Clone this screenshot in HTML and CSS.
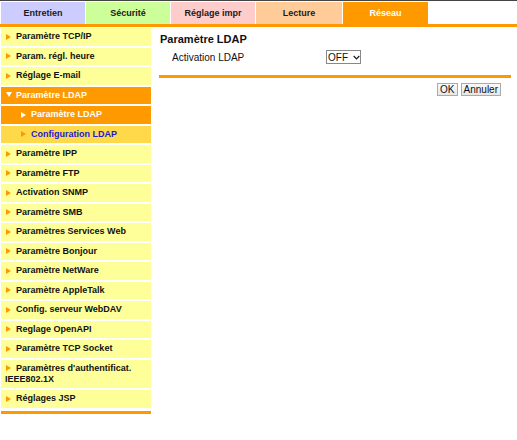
FILE: index.html
```html
<!DOCTYPE html>
<html lang="fr">
<head>
<meta charset="utf-8">
<title>Paramètre LDAP</title>
<link rel="stylesheet" href="styles.css">
</head>
<body>
<div class="topline"></div>
<div class="tabs">
  <div class="tab tab-entretien">Entretien</div>
  <div class="tab tab-securite">Sécurité</div>
  <div class="tab tab-reglage">Réglage impr</div>
  <div class="tab tab-lecture">Lecture</div>
  <div class="tab tab-reseau">Réseau</div>
</div>
<div class="tabrule"></div>
<div class="main">
  <nav class="side">
    <div class="row"><span class="arr"></span>Paramètre TCP/IP</div>
    <div class="row"><span class="arr"></span>Param. régl. heure</div>
    <div class="row"><span class="arr"></span>Réglage E-mail</div>
    <div class="row row-open"><span class="arr-down"></span>Paramètre LDAP</div>
    <div class="row row-sub row-open"><span class="arr arr-white"></span>Paramètre LDAP</div>
    <div class="row row-sub row-cur"><span class="arr"></span>Configuration LDAP</div>
    <div class="row"><span class="arr"></span>Paramètre IPP</div>
    <div class="row"><span class="arr"></span>Paramètre FTP</div>
    <div class="row"><span class="arr"></span>Activation SNMP</div>
    <div class="row"><span class="arr"></span>Paramètre SMB</div>
    <div class="row"><span class="arr"></span>Paramètres Services Web</div>
    <div class="row"><span class="arr"></span>Paramètre Bonjour</div>
    <div class="row"><span class="arr"></span>Paramètre NetWare</div>
    <div class="row"><span class="arr"></span>Paramètre AppleTalk</div>
    <div class="row"><span class="arr"></span>Config. serveur WebDAV</div>
    <div class="row"><span class="arr"></span>Reglage OpenAPI</div>
    <div class="row"><span class="arr"></span>Paramètre TCP Socket</div>
    <div class="row"><span class="arr"></span>Paramètres d'authentificat. IEEE802.1X</div>
    <div class="row"><span class="arr"></span>Réglages JSP</div>
    <div class="side-rule"></div>
  </nav>
  <section class="content">
    <h1 class="title">Paramètre LDAP</h1>
    <div class="field">
      <span class="label">Activation LDAP</span>
      <span class="select">OFF<svg class="chev" width="8" height="5" viewBox="0 0 8 5"><path d="M0.8 0.8 L4 4 L7.2 0.8" fill="none" stroke="#1a1a1a" stroke-width="1.4"/></svg></span>
    </div>
    <div class="rule"></div>
    <div class="buttons">
      <button class="btn">OK</button>
      <button class="btn">Annuler</button>
    </div>
  </section>
</div>
</body>
</html>
```
FILE: styles.css
```css
html, body {
  margin: 0;
  padding: 0;
  background: #fff;
}
body {
  font-family: "Liberation Sans", Arial, sans-serif;
  width: 517px;
  height: 440px;
  overflow: hidden;
}
.topline {
  height: 1px;
  background: #444;
}
.tabs {
  display: flex;
  gap: 1px;
  margin-top: 1px;
  padding-left: 1px;
  height: 22px;
}
.tab {
  width: 84px;
  height: 22px;
  line-height: 22px;
  text-align: center;
  font-size: 9px;
  font-weight: bold;
  color: #1a1a1a;
}
.tab-entretien { background: #ccccff; }
.tab-securite { background: #ccff99; }
.tab-reglage { background: #ffcccc; }
.tab-lecture { background: #ffcc99; width: 86px; }
.tab-reseau { background: #ff9900; color: #fff; width: 85px; }
.tabrule {
  height: 3px;
  background: #ff9900;
}
.main {
  display: flex;
  align-items: flex-start;
  padding-top: 1px;
}
.side {
  width: 150px;
  margin-left: 1px;
  display: flex;
  flex-direction: column;
  gap: 2px;
}
.row {
  background: #ffff99;
  font-size: 9px;
  font-weight: bold;
  color: #111;
  line-height: 11px;
  padding: 3.25px 4px;
}
.row-open {
  background: #ff9900;
  color: #fff;
}
.row-sub {
  padding-left: 19px;
}
.row-cur {
  background: #ffd94a;
  color: #1a1ad6;
}
.arr {
  display: inline-block;
  width: 0;
  height: 0;
  border-left: 5px solid #ff9900;
  border-top: 3.5px solid transparent;
  border-bottom: 3.5px solid transparent;
  margin-right: 5px;
  margin-left: 1px;
  vertical-align: -0.5px;
}
.arr-white {
  border-left-color: #fff;
}
.arr-down {
  display: inline-block;
  width: 0;
  height: 0;
  border-top: 5px solid #fff;
  border-left: 3px solid transparent;
  border-right: 3px solid transparent;
  margin-right: 4px;
  margin-left: 1px;
  vertical-align: 1px;
}
.side-rule {
  height: 3px;
  background: #ff9900;
  margin-top: 1.5px;
}
.content {
  margin-left: 8px;
  width: 352px;
  box-sizing: border-box;
}
.title {
  margin: 5px 0 0 1px;
  font-size: 11px;
  line-height: 13px;
  font-weight: bold;
  color: #111;
}
.field {
  display: flex;
  align-items: center;
  margin-top: 4px;
  height: 14px;
}
.label {
  width: 154px;
  margin-left: 13px;
  font-size: 10px;
  color: #111;
}
.select {
  display: inline-flex;
  align-items: center;
  box-sizing: border-box;
  width: 35px;
  height: 14px;
  border: 1px solid #888;
  font-size: 10px;
  padding-left: 1px;
  color: #111;
}
.chev {
  margin-left: 5px;
}
.rule {
  height: 3px;
  background: #ff9900;
  margin-top: 11px;
}
.buttons {
  display: flex;
  justify-content: flex-end;
  gap: 3px;
  margin-top: 5px;
  padding-right: 10px;
}
.btn {
  font-family: "Liberation Sans", Arial, sans-serif;
  font-size: 10px;
  height: 13px;
  line-height: 11px;
  padding: 0 2px;
  margin: 0;
  border: 1px solid #aaa;
  background: linear-gradient(#fafafa, #e6e6e6);
  color: #111;
}
```
